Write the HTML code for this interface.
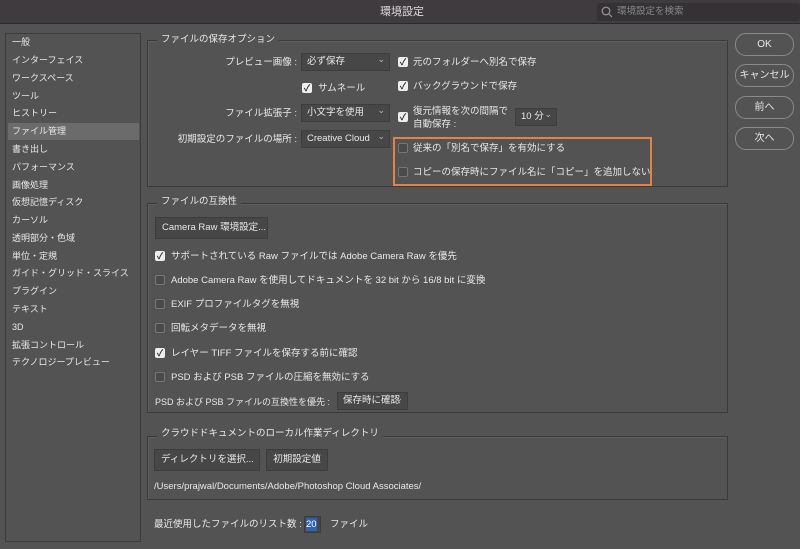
<!DOCTYPE html>
<html><head><meta charset="utf-8"><style>
*{margin:0;padding:0;box-sizing:border-box}
body{width:800px;height:549px;background:#535353;position:relative;overflow:hidden;font-family:"Liberation Sans","Noto Sans CJK JP",sans-serif;font-size:9.5px;line-height:12px;color:#e8e8e8}
.a{position:absolute;white-space:nowrap}
.tb{left:0;top:0;width:800px;height:24px;background:#3f3b3e;border-bottom:1px solid #2a2a2a}
.side{left:5px;top:33px;width:136px;height:509px;border:1px solid #3c3c3c;background:#535353}
.si{position:absolute;left:2px;width:131px;height:17px;line-height:17px;padding-left:4px;font-size:9px}
.box{border:1px solid #3a3a3a;box-shadow:inset 1px 1px 0 #5e5e5e}
.lg{background:#535353;padding:0 4px;line-height:12px}
.dd{background:#474747;border:1px solid #3d3d3d;height:18px;line-height:16px;padding-left:5px}
.dd:after{content:"⌄";position:absolute;right:4px;top:-3px;font-size:9px;color:#bbb}
.cb{width:10px;height:10px;border-radius:2px;background:#eee;color:#333;font-size:9px;line-height:10px;text-align:center;font-weight:bold}
.cu{width:10px;height:10px;border-radius:2px;border:1px solid #777;background:#4a4a4a}
.btn{background:#474747;border:1px solid #3c3c3c;height:22px;line-height:20px;padding:0 6px;text-align:center}
.rb{left:735px;width:59px;height:23px;border:1px solid #8a8a8a;border-radius:11px;text-align:center;line-height:21px;font-size:10px}
.r{text-align:right}
</style></head><body>
<div class="a tb"></div>
<div class="a" style="left:380px;top:5px;font-size:11px;line-height:14px;color:#ddd">環境設定</div>
<div class="a" style="left:597px;top:3px;width:203px;height:18px;background:#353235;border-radius:3px;color:#888;line-height:18px;padding-left:20px">環境設定を検索</div>
<svg class="a" style="left:601px;top:6px" width="12" height="12"><circle cx="5" cy="5" r="3.8" fill="none" stroke="#999" stroke-width="1.2"/><line x1="8" y1="8" x2="11" y2="11" stroke="#999" stroke-width="1.2"/></svg>

<div class="a side">
<div class="si" style="top:0">一般</div>
<div class="si" style="top:18px">インターフェイス</div>
<div class="si" style="top:36px">ワークスペース</div>
<div class="si" style="top:54px">ツール</div>
<div class="si" style="top:71px">ヒストリー</div>
<div class="si" style="top:89px;background:#6b6b6b">ファイル管理</div>
<div class="si" style="top:107px">書き出し</div>
<div class="si" style="top:125px">パフォーマンス</div>
<div class="si" style="top:143px">画像処理</div>
<div class="si" style="top:160px">仮想記憶ディスク</div>
<div class="si" style="top:178px">カーソル</div>
<div class="si" style="top:196px">透明部分・色域</div>
<div class="si" style="top:214px">単位・定規</div>
<div class="si" style="top:231px">ガイド・グリッド・スライス</div>
<div class="si" style="top:249px">プラグイン</div>
<div class="si" style="top:267px">テキスト</div>
<div class="si" style="top:285px">3D</div>
<div class="si" style="top:303px">拡張コントロール</div>
<div class="si" style="top:320px">テクノロジープレビュー</div>
</div>

<div class="a rb" style="top:33px">OK</div>
<div class="a rb" style="top:64px">キャンセル</div>
<div class="a rb" style="top:96px">前へ</div>
<div class="a rb" style="top:127px">次へ</div>

<!-- box 1 -->
<div class="a box" style="left:147px;top:40px;width:581px;height:147px"></div>
<div class="a lg" style="left:157px;top:34px">ファイルの保存オプション</div>
<div class="a r" style="right:503px;top:57px">プレビュー画像 :</div>
<div class="a dd" style="left:301px;top:53px;width:89px">必ず保存</div>
<div class="a cb" style="left:302px;top:83px">✓</div><div class="a" style="left:318px;top:83px">サムネール</div>
<div class="a r" style="right:503px;top:108px">ファイル拡張子 :</div>
<div class="a dd" style="left:301px;top:104px;width:89px">小文字を使用</div>
<div class="a r" style="right:503px;top:134px">初期設定のファイルの場所 :</div>
<div class="a dd" style="left:301px;top:130px;width:89px">Creative Cloud</div>
<div class="a cb" style="left:398px;top:57px">✓</div><div class="a" style="left:413px;top:57px">元のフォルダーへ別名で保存</div>
<div class="a cb" style="left:398px;top:81px">✓</div><div class="a" style="left:413px;top:81px">バックグラウンドで保存</div>
<div class="a cb" style="left:398px;top:112px">✓</div>
<div class="a" style="left:413px;top:105px;line-height:13px">復元情報を次の間隔で<br>自動保存 :</div>
<div class="a dd" style="left:515px;top:108px;width:42px">10 分</div>
<div class="a" style="left:393px;top:137px;width:259px;height:49px;border:2px solid #e0824a"></div>
<div class="a cu" style="left:398px;top:143px"></div><div class="a" style="left:413px;top:143px">従来の「別名で保存」を有効にする</div>
<div class="a cu" style="left:398px;top:167px"></div><div class="a" style="left:413px;top:167px">コピーの保存時にファイル名に「コピー」を追加しない</div>

<!-- box 2 -->
<div class="a box" style="left:147px;top:203px;width:581px;height:210px"></div>
<div class="a lg" style="left:157px;top:196px">ファイルの互換性</div>
<div class="a btn" style="left:155px;top:217px;width:113px">Camera Raw 環境設定...</div>
<div class="a cb" style="left:155px;top:251px">✓</div><div class="a" style="left:171px;top:251px">サポートされている Raw ファイルでは Adobe Camera Raw を優先</div>
<div class="a cu" style="left:155px;top:275px"></div><div class="a" style="left:171px;top:275px">Adobe Camera Raw を使用してドキュメントを 32 bit から 16/8 bit に変換</div>
<div class="a cu" style="left:155px;top:299px"></div><div class="a" style="left:171px;top:299px">EXIF プロファイルタグを無視</div>
<div class="a cu" style="left:155px;top:323px"></div><div class="a" style="left:171px;top:323px">回転メタデータを無視</div>
<div class="a cb" style="left:155px;top:348px">✓</div><div class="a" style="left:171px;top:348px">レイヤー TIFF ファイルを保存する前に確認</div>
<div class="a cu" style="left:155px;top:372px"></div><div class="a" style="left:171px;top:372px">PSD および PSB ファイルの圧縮を無効にする</div>
<div class="a" style="left:155px;top:396px;font-size:9px">PSD および PSB ファイルの互換性を優先 :</div>
<div class="a dd" style="left:337px;top:392px;width:71px">保存時に確認</div>

<!-- box 3 -->
<div class="a box" style="left:147px;top:436px;width:581px;height:64px"></div>
<div class="a lg" style="left:157px;top:428px">クラウドドキュメントのローカル作業ディレクトリ</div>
<div class="a btn" style="left:154px;top:449px;width:106px">ディレクトリを選択...</div>
<div class="a btn" style="left:266px;top:449px;width:62px">初期設定値</div>
<div class="a" style="left:154px;top:481px">/Users/prajwal/Documents/Adobe/Photoshop Cloud Associates/</div>

<div class="a" style="left:154px;top:519px">最近使用したファイルのリスト数 :</div>
<div class="a" style="left:304px;top:516px;width:17px;height:17px;background:#474747;border:1px solid #3c3c3c"></div>
<div class="a" style="left:306px;top:518px;background:#2f62b3;color:#fff;line-height:13px">20</div>
<div class="a" style="left:330px;top:519px">ファイル</div>
</body></html>
